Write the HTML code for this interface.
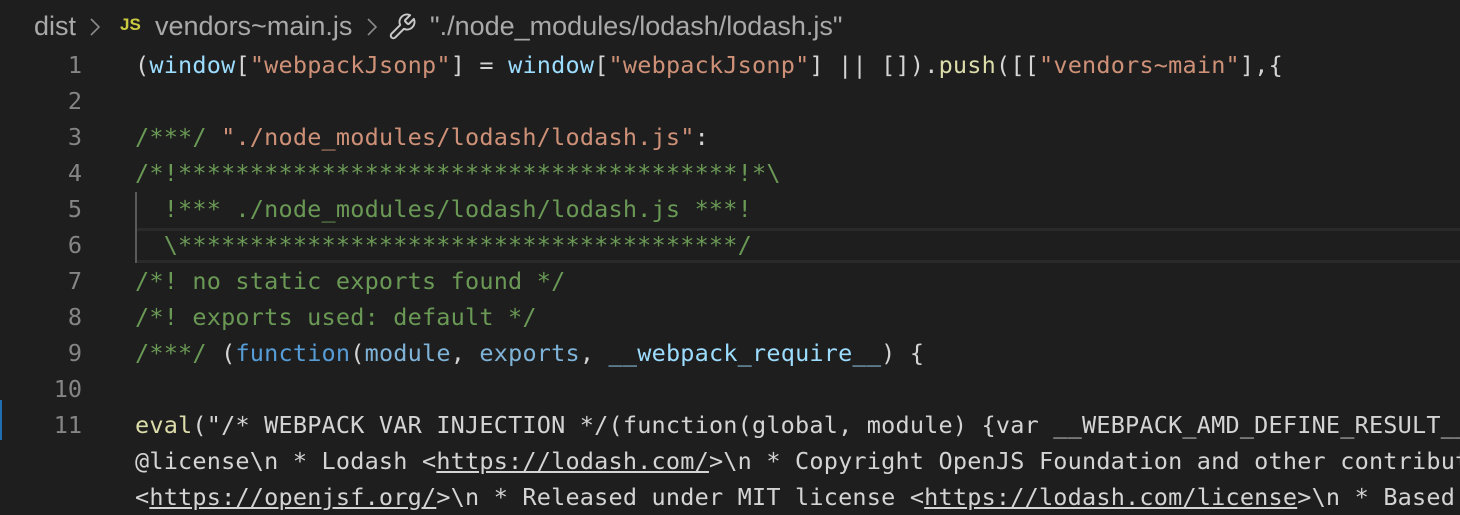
<!DOCTYPE html>
<html><head><meta charset="utf-8"><style>
body{margin:0;width:1460px;height:500px;background:#1e1e1e;overflow:hidden;position:relative;font-family:"Liberation Sans",sans-serif}
.bc{position:absolute;top:0;left:0;height:50px;width:1460px;color:#a9a9a9;font-size:27px}
.bc span{position:absolute;top:11px;white-space:nowrap}
.code{position:absolute;left:0;top:47px;font-family:"DejaVu Sans Mono",monospace;font-size:23.5px;letter-spacing:0.2px}
.ln{position:absolute;left:0;width:82px;text-align:right;color:#858585;height:36px;line-height:36px;letter-spacing:0}
.t{position:absolute;left:135px;white-space:pre;height:36px;line-height:36px;color:#d4d4d4}
.s{color:#ce9178}.k{color:#569cd6}.v{color:#9cdcfe}.p{color:#7fb3d8}.c{color:#6a9955}.f{color:#dcdcaa}
</style></head><body>
<div class="bc">
<span style="left:34px">dist</span>
<svg style="position:absolute;left:89px;top:17px" width="12" height="20" viewBox="0 0 12 20" fill="none" stroke="#8a8a8a" stroke-width="1.6"><path d="M2 2 L10 10 L2 18"/></svg>
<span style="left:120px;top:15px;font-size:17px;color:#cbcb41;font-weight:bold">JS</span>
<span style="left:155px">vendors~main.js</span>
<svg style="position:absolute;left:366px;top:17px" width="12" height="20" viewBox="0 0 12 20" fill="none" stroke="#8a8a8a" stroke-width="1.6"><path d="M2 2 L10 10 L2 18"/></svg>
<svg style="position:absolute;left:387px;top:12px" width="30" height="30" viewBox="0 0 24 24" fill="none" stroke="#c8c8c8" stroke-width="1.6" stroke-linejoin="round"><path d="M14.7 6.3a1 1 0 0 0 0 1.4l1.6 1.6a1 1 0 0 0 1.4 0l3.77-3.77a6 6 0 0 1-7.940 7.94l-6.91 6.91a2.12 2.12 0 0 1-3-3l6.91-6.91a6 6 0 0 1 7.94-7.94l-3.76 3.76z"/></svg>
<span style="left:430px">"./node_modules/lodash/lodash.js"</span>
</div>
<div style="position:absolute;left:0;top:400px;width:2px;height:40px;background:#1f6fb0"></div>
<div style="position:absolute;left:135px;top:228px;width:1325px;height:35px;box-sizing:border-box;border-top:3px solid #2a2a2a;border-bottom:3px solid #2a2a2a"></div>
<div style="position:absolute;left:135px;top:192px;width:2px;height:71px;background:#5a5a5a"></div>
<div class="code">
<div class="ln" style="top:0">1</div><div class="t" style="top:0">(<span class="v">window</span>[<span class="s">"webpackJsonp"</span>] = <span class="v">window</span>[<span class="s">"webpackJsonp"</span>] || []).<span class="f">push</span>([[<span class="s">"vendors~main"</span>],{</div>
<div class="ln" style="top:36px">2</div>
<div class="ln" style="top:72px">3</div><div class="t" style="top:72px"><span class="c">/***/</span> <span class="s">"./node_modules/lodash/lodash.js"</span>:</div>
<div class="ln" style="top:108px">4</div><div class="t c" style="top:108px">/*!***************************************!*\</div>
<div class="ln" style="top:144px">5</div><div class="t c" style="top:144px">  !*** ./node_modules/lodash/lodash.js ***!</div>
<div class="ln" style="top:180px">6</div><div class="t c" style="top:180px">  \***************************************/</div>
<div class="ln" style="top:216px">7</div><div class="t c" style="top:216px">/*! no static exports found */</div>
<div class="ln" style="top:252px">8</div><div class="t c" style="top:252px">/*! exports used: default */</div>
<div class="ln" style="top:288px">9</div><div class="t" style="top:288px"><span class="c">/***/</span> (<span class="k">function</span>(<span class="p">module</span>, <span class="p">exports</span>, <span class="v">__webpack_require__</span>) {</div>
<div class="ln" style="top:324px">10</div>
<div class="ln" style="top:360px">11</div><div class="t" style="top:360px"><span class="f">eval</span>("/* WEBPACK VAR INJECTION */(function(global, module) {var __WEBPACK_AMD_DEFINE_RESULT__;</div>
<div class="t" style="top:396px">@license\n * Lodash &lt;<u>https://lodash.com/</u>&gt;\n * Copyright OpenJS Foundation and other contributors</div>
<div class="t" style="top:432px">&lt;<u>https://openjsf.org/</u>&gt;\n * Released under MIT license &lt;<u>https://lodash.com/license</u>&gt;\n * Based on</div>
</div>
</body></html>
